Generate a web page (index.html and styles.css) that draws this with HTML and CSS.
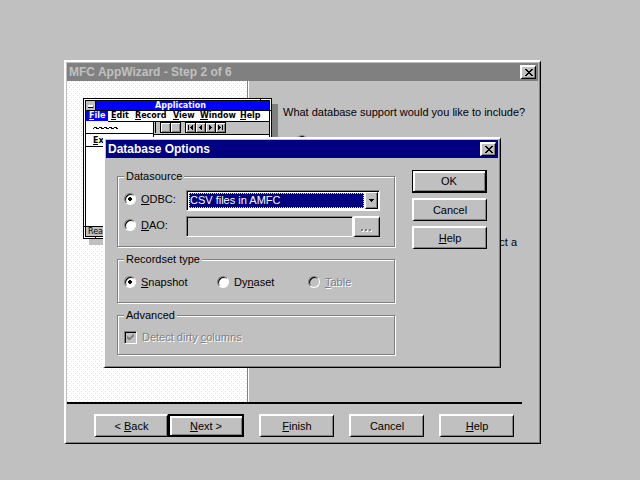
FILE: index.html
```html
<!DOCTYPE html>
<html lang="en">
<head>
<meta charset="utf-8">
<title>MFC AppWizard</title>
<link rel="stylesheet" href="styles.css">
</head>
<body>
<section class="window wizard">
  <header class="titlebar inactive">
    <h1>MFC AppWizard - Step 2 of 6</h1>
    <button class="close" type="button" aria-label="Close"><svg width="8" height="7" viewBox="0 0 8 7" shape-rendering="crispEdges"><path d="M0 0h2v1h1v1h2V1h1V0h2v1H7v1H6v1H5v1h1v1h1v1h1v1H6V6H5V5H3v1H2v1H0V6h1V5h1V4h1V3H2V2H1V1H0z"/></svg></button>
  </header>
  <main class="page">
    <div class="preview">
      <svg class="app" width="195" height="147" viewBox="83 98 195 147" shape-rendering="crispEdges" role="img" aria-label="Application preview">
        <path fill="#c0c0c0" d="M89 104h160v141H89z"/>
        <path fill="#808080" d="M249 104h29v141h-29z"/>
        <path d="M83 98h189v141H83z"/>
        <path fill="#fff" d="M84 99h187v139H84z"/>
        <path d="M85 100h185v137H85zM260 98h1v3h-1zM270 110h2v1h-2zM83 226h3v1h-3zM95 236h1v3h-1z"/>
        <path fill="#fff" d="M86 101h183v135H86z"/>
        <path fill="#00f" d="M96 101h173v9H96zM86 111h22v10H86z"/>
        <path fill="#c0c0c0" d="M86 101h9v9h-9z"/>
        <path d="M95 101h1v9h-1zM86 110h183v1H86z"/>
        <path fill="#808080" d="M89 106h5v2h-5z"/><path fill="#fff" d="M88 105h5v2h-5z"/><path d="M88 107h5v1h-5z"/>
        <path d="M108 121h161v1H108z"/>
        <path fill="#c0c0c0" d="M154 122h115v12H154z"/>
        <path d="M154 134h115v1H154zM153 121h1v18h-1zM86 133h67v1H86zM86 146h67v1H86zM155 122h1v11h-1z"/>
        <path fill="none" stroke="#000" d="M93 128.500l2-1 3 1 2-1 3 1 2-1 3 1 2-1 3 1 2-1 3 1"/>
        <path d="M160 122h21v11h-21zM185 122h41v11h-41z"/>
        <path fill="#fff" d="M161 123h9v9h-9zM171 123h9v9h-9zM186 123h9v9h-9zM196 123h9v9h-9zM206 123h9v9h-9zM216 123h9v9h-9z"/>
        <path fill="#808080" d="M162 124h8v8h-8zM172 124h8v8h-8zM187 124h8v8h-8zM197 124h8v8h-8zM207 124h8v8h-8zM217 124h8v8h-8z"/>
        <path fill="#c0c0c0" d="M162 124h7v7h-7zM172 124h7v7h-7zM187 124h7v7h-7zM197 124h7v7h-7zM207 124h7v7h-7zM217 124h7v7h-7z"/>
        <path d="M188 125h1v5h-1zM192 125h1v5h-1v-1h-1v-1h-1v-1h1v-1h1zM202 125v5h-1v-1h-1v-1h-1v-1h1v-1h1v-1zM209 125h1v1h1v1h1v1h-1v1h-1v1h-1zM218 125h1v1h1v1h1v1h-1v1h-1v1h-1zM222 125h1v5h-1z"/>
        <path fill="#c0c0c0" d="M86 227h183v9H86z"/><path d="M86 226h183v1H86z"/>
        <g class="app-text">
          <text class="light" x="155" y="108">Application</text>
          <text class="light" x="89" y="118">File</text>
          <text x="111" y="118">Edit</text>
          <text x="135" y="118">Record</text>
          <text x="173" y="118">View</text>
          <text x="200" y="118">Window</text>
          <text x="240" y="118">Help</text>
          <text x="93" y="143">Ex</text>
          <text class="status" x="88" y="234">Rea</text>
        </g>
        <path fill="#fff" d="M89 119h5v1h-5z"/>
        <path d="M111 119h5v1h-5zM135 119h6v1h-6zM173 119h6v1h-6zM200 119h8v1h-8zM240 119h6v1h-6zM93 144h5v1h-5z"/>
      </svg>
    </div>
    <div class="question">
      <p>What database support would you like to include?</p>
      <input class="radio" type="radio" name="support" aria-label="Database support">
      <p class="note">ct a</p>
    </div>
  </main>
  <hr>
  <footer class="actions">
    <div class="pair">
      <button class="btn" type="button"><span>&lt; <u>B</u>ack</span></button>
      <button class="btn primary" type="button"><span><u>N</u>ext &gt;</span></button>
    </div>
    <button class="btn" type="button"><span><u>F</u>inish</span></button>
    <button class="btn" type="button">Cancel</button>
    <button class="btn" type="button"><span><u>H</u>elp</span></button>
  </footer>
</section>

<section class="window dialog" role="dialog" aria-labelledby="dialog-title">
  <header class="titlebar">
    <h2 id="dialog-title">Database Options</h2>
    <button class="close" type="button" aria-label="Close"><svg width="8" height="7" viewBox="0 0 8 7" shape-rendering="crispEdges"><path d="M0 0h2v1h1v1h2V1h1V0h2v1H7v1H6v1H5v1h1v1h1v1h1v1H6V6H5V5H3v1H2v1H0V6h1V5h1V4h1V3H2V2H1V1H0z"/></svg></button>
  </header>
  <form class="options">
    <div class="groups">
      <fieldset class="sources">
        <legend>Datasource</legend>
        <div class="row">
          <input class="radio" type="radio" name="source" id="odbc" checked>
          <label for="odbc"><u>O</u>DBC:</label>
          <div class="combo">
            <select aria-label="ODBC data source"><option>CSV files in AMFC</option></select>
            <span class="arrow"><svg width="5" height="3" viewBox="0 0 5 3" shape-rendering="crispEdges"><path d="M0 0h5v1H4v1H3v1H2V2H1V1H0z"/></svg></span>
          </div>
        </div>
        <div class="row">
          <input class="radio" type="radio" name="source" id="dao">
          <label for="dao"><u>D</u>AO:</label>
          <div class="file">
            <input class="path" type="text" aria-label="DAO file" disabled>
            <button class="btn browse" type="button" disabled aria-label="Browse"><svg width="12" height="3" viewBox="0 0 12 3" shape-rendering="crispEdges"><path fill="#fff" d="M1 1h2v2H1zM5 1h2v2H5zM9 1h2v2H9z"/><path fill="#808080" d="M0 0h2v2H0zM4 0h2v2H4zM8 0h2v2H8z"/></svg></button>
          </div>
        </div>
      </fieldset>
      <fieldset class="types">
        <legend>Recordset type</legend>
        <div class="choices">
          <div class="choice"><input class="radio" type="radio" name="type" id="snapshot" checked><label for="snapshot"><u>S</u>napshot</label></div>
          <div class="choice"><input class="radio" type="radio" name="type" id="dynaset"><label for="dynaset">Dy<u>n</u>aset</label></div>
          <div class="choice"><input class="radio" type="radio" name="type" id="table" disabled><label for="table"><u>T</u>able</label></div>
        </div>
      </fieldset>
      <fieldset class="advanced">
        <legend>Advanced</legend>
        <div class="choice"><input class="check" type="checkbox" id="dirty" checked disabled><label for="dirty">Detect dirty <u>c</u>olumns</label></div>
      </fieldset>
    </div>
    <div class="commands">
      <button class="btn default" type="button">OK</button>
      <button class="btn" type="button">Cancel</button>
      <button class="btn" type="button"><span><u>H</u>elp</span></button>
    </div>
  </form>
</section>
</body>
</html>
```

FILE: styles.css
```css
* { box-sizing: border-box; }

body {
  margin: 0;
  min-height: 100vh;
  background: #c0c0c0;
  color: #000;
  font: 11px/14px "Liberation Sans", Arial, sans-serif;
}

button, input, select { font: inherit; color: inherit; margin: 0; }
h1, h2, p { margin: 0; }
svg { display: block; }
u { text-underline-offset: 1px; text-decoration-thickness: 1px; text-decoration-skip-ink: none; }

/* Windows on the desktop */
.window {
  position: absolute;
  display: flex;
  flex-direction: column;
  padding: 1px 2px 2px 1px;
  background: #c0c0c0;
  border: solid;
  border-width: 2px 1px 1px 2px;
  border-color: #fff #000 #000 #fff;
  box-shadow: inset -1px -1px #808080;
}
.wizard { left: 64px; right: 99px; top: 60px; bottom: 36px; }
.dialog { left: 103px; right: 139px; top: 137px; }

.titlebar {
  display: flex;
  align-items: center;
  justify-content: space-between;
  height: 18px;
  padding: 0 2px;
  background: #000080;
  color: #fff;
}
.titlebar.inactive { background: #808080; color: #c0c0c0; }
.titlebar h1, .titlebar h2 { font-size: 12px; line-height: 18px; font-weight: bold; }

.close, .btn {
  display: flex;
  align-items: center;
  justify-content: center;
  padding: 0;
  background: #c0c0c0;
  color: #000;
  border: solid;
  border-width: 2px 1px 1px 2px;
  border-color: #fff #000 #000 #fff;
  border-radius: 0;
  box-shadow: inset -1px -1px #808080;
}
.close { width: 16px; height: 14px; }
.btn { width: 75px; height: 23px; }
.btn.primary {
  width: 76px;
  border: 2px solid #000;
  box-shadow: inset 2px 2px #fff, inset -1px -1px #808080;
}
.btn.default {
  border: solid #000;
  border-width: 1px 2px 2px 1px;
  box-shadow: inset 2px 2px #fff, inset -1px -1px #808080;
}

/* Wizard page */
.page { flex: 1; display: flex; min-height: 0; }
.preview {
  flex: none;
  width: 182px;
  padding: 17px 0 0 16px;
  border-right: 1px solid #fff;
  box-shadow: inset -1px 0 #808080;
  background:
    conic-gradient(from 270deg at 1px 1px, #ff0 25%, transparent 0) 0 0 / 4px 4px,
    conic-gradient(from 270deg at 1px 1px, #ff0 25%, transparent 0) 2px 2px / 4px 4px,
    #fff;
}
.app { position: relative; }
.app-text { font: bold 8px "DejaVu Sans", sans-serif; }
.app-text .light { fill: #fff; }
.app-text .status { font-weight: normal; }
.question { flex: 1; min-width: 0; padding: 24px 16px 0 34px; white-space: nowrap; }
.question .radio { display: block; margin: 16px 0 0 13px; }
.note { margin-top: 88px; text-align: right; padding-right: 5px; }

hr { width: auto; height: 2px; margin: 0 16px 0 0; border: 0; background: #000; }

.actions { display: flex; gap: 15px; padding: 10px 0 4px 27px; }
.pair { display: flex; }
.pair .btn:first-child { width: 74px; }

/* Dialog */
.options { display: flex; gap: 17px; padding: 11px 11px 10px; }
.groups { flex: 1; display: flex; flex-direction: column; gap: 5px; }
.commands { display: flex; flex-direction: column; gap: 5px; padding-top: 1px; }

fieldset {
  min-width: 0;
  margin: 0;
  padding: 8px 14px 0 6px;
  border: 1px solid #808080;
  box-shadow: inset 1px 1px #fff, 1px 1px #fff;
}
legend { padding: 0 2px; background: #c0c0c0; }
.sources { display: grid; gap: 5px; padding-top: 7px; padding-bottom: 9px; }
.types { padding-top: 9px; padding-bottom: 13px; }
.advanced { padding-bottom: 10px; }

.row { display: grid; grid-template-columns: 12px 40px 1fr; column-gap: 5px; align-items: center; }
.row > .radio, .row > label { margin-bottom: 3px; }
.choices { display: grid; grid-template-columns: 93px 91px 1fr; }
.choice { display: flex; align-items: center; gap: 5px; }
:disabled + label { color: #808080; text-shadow: 1px 1px #fff; }

.radio {
  appearance: none;
  flex: none;
  width: 12px;
  height: 12px;
  border: 1px solid;
  border-color: #808080 #fff #fff #808080;
  border-radius: 50%;
  background: #fff;
  box-shadow: inset 1px 1px #000;
}
.radio:checked { background: radial-gradient(circle at 50% 50%, #000 2px, #fff 2px); }
.radio:disabled { background: #c0c0c0; }

.check {
  appearance: none;
  flex: none;
  width: 13px;
  height: 13px;
  border: 1px solid;
  border-color: #808080 #fff #fff #808080;
  box-shadow: inset 1px 1px #000;
  display: grid;
  place-items: center;
}
.check:checked::before {
  content: "";
  width: 7px;
  height: 7px;
  background: #808080;
  clip-path: polygon(0 30%, 35% 60%, 100% 0, 100% 40%, 35% 100%, 0 70%);
}

.combo {
  display: flex;
  height: 21px;
  padding: 1px;
  border: solid;
  border-width: 1px;
  border-color: #808080 #fff #fff #808080;
  background: #fff;
  box-shadow: inset 1px 1px #000;
}
.combo select {
  appearance: none;
  flex: 1;
  min-width: 0;
  margin: 1px;
  padding: 0;
  border: 1px dotted #ff0;
  border-radius: 0;
  background: #000080;
  color: #fff;
  line-height: 13px;
}
.arrow {
  display: flex;
  align-items: center;
  justify-content: center;
  width: 13px;
  background: #c0c0c0;
  border: 1px solid;
  border-color: #fff #000 #000 #fff;
  box-shadow: inset -1px -1px #808080;
}
.file { display: flex; }
.path {
  flex: 1;
  min-width: 0;
  height: 21px;
  border: 1px solid;
  border-color: #808080 #fff #fff #808080;
  border-radius: 0;
  background: #c0c0c0;
  box-shadow: inset 1px 1px #000;
}
.btn.browse { width: 27px; height: 21px; padding-top: 7px; }
```
